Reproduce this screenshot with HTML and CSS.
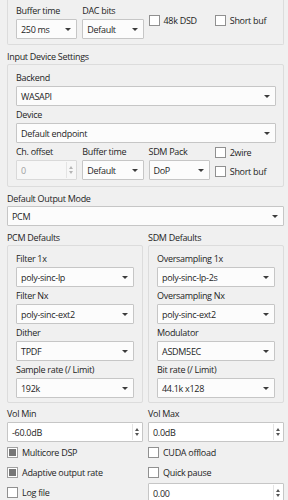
FILE: index.html
```html
<!DOCTYPE html>
<html lang="en">
<head>
    <meta charset="UTF-8">
    <meta name="viewport" content="width=device-width, initial-scale=1.0">
    <title>Audio Settings</title>
    <link rel="stylesheet" href="styles.css">
</head>
<body>
    <div class="page">
        <div class="group group-top">
            <div class="row4">
                <div class="field">
                    <div class="lbl">Buffer time</div>
                    <div class="combo">250 ms</div>
                </div>
                <div class="field">
                    <div class="lbl">DAC bits</div>
                    <div class="combo">Default</div>
                </div>
                <label class="check mid"><span class="box"></span>48k DSD</label>
                <label class="check mid"><span class="box"></span>Short buf</label>
            </div>
        </div>

        <div class="title">Input Device Settings</div>
        <div class="group">
            <div class="field">
                <div class="lbl">Backend</div>
                <div class="combo">WASAPI</div>
            </div>
            <div class="field">
                <div class="lbl">Device</div>
                <div class="combo">Default endpoint</div>
            </div>
            <div class="row4">
                <div class="field">
                    <div class="lbl">Ch. offset</div>
                    <div class="spin disabled"><span class="val">0</span><span class="arrows"><i class="up"></i><i class="down"></i></span></div>
                </div>
                <div class="field">
                    <div class="lbl">Buffer time</div>
                    <div class="combo">Default</div>
                </div>
                <div class="field">
                    <div class="lbl">SDM Pack</div>
                    <div class="combo">DoP</div>
                </div>
                <div class="checks">
                    <label class="check"><span class="box"></span>2wire</label>
                    <label class="check"><span class="box"></span>Short buf</label>
                </div>
            </div>
        </div>

        <div class="title">Default Output Mode</div>
        <div class="combo">PCM</div>

        <div class="cols">
            <div class="col">
                <div class="title">PCM Defaults</div>
                <div class="group">
                    <div class="field">
                        <div class="lbl">Filter 1x</div>
                        <div class="combo">poly-sinc-lp</div>
                    </div>
                    <div class="field">
                        <div class="lbl">Filter Nx</div>
                        <div class="combo">poly-sinc-ext2</div>
                    </div>
                    <div class="field">
                        <div class="lbl">Dither</div>
                        <div class="combo">TPDF</div>
                    </div>
                    <div class="field">
                        <div class="lbl">Sample rate (/ Limit)</div>
                        <div class="combo">192k</div>
                    </div>
                </div>
            </div>
            <div class="col">
                <div class="title">SDM Defaults</div>
                <div class="group">
                    <div class="field">
                        <div class="lbl">Oversampling 1x</div>
                        <div class="combo">poly-sinc-lp-2s</div>
                    </div>
                    <div class="field">
                        <div class="lbl">Oversampling Nx</div>
                        <div class="combo">poly-sinc-ext2</div>
                    </div>
                    <div class="field">
                        <div class="lbl">Modulator</div>
                        <div class="combo">ASDM5EC</div>
                    </div>
                    <div class="field">
                        <div class="lbl">Bit rate (/ Limit)</div>
                        <div class="combo">44.1k x128</div>
                    </div>
                </div>
            </div>
        </div>

        <div class="cols bottom">
            <div class="col">
                <div class="lbl">Vol Min</div>
                <div class="spin"><span class="val">-60.0dB</span><span class="arrows"><i class="up"></i><i class="down"></i></span></div>
                <label class="check line"><span class="box partial"></span>Multicore DSP</label>
                <label class="check line"><span class="box partial"></span>Adaptive output rate</label>
                <label class="check line"><span class="box"></span>Log file</label>
            </div>
            <div class="col">
                <div class="lbl">Vol Max</div>
                <div class="spin"><span class="val">0.0dB</span><span class="arrows"><i class="up"></i><i class="down"></i></span></div>
                <label class="check line"><span class="box"></span>CUDA offload</label>
                <label class="check line"><span class="box"></span>Quick pause</label>
                <div class="line">
                    <div class="spin"><span class="val">0.00</span><span class="arrows"><i class="up"></i><i class="down"></i></span></div>
                </div>
            </div>
        </div>
    </div>
</body>
</html>
```

FILE: styles.css
```css
* {
    margin: 0;
    padding: 0;
    box-sizing: border-box;
}

body {
    font-family: 'Open Sans', 'Noto Sans', sans-serif;
    font-size: 9px;
    letter-spacing: -0.3px;
    color: #1e1e1e;
    background: #f0f0f0;
    overflow: hidden;
}

.page {
    width: 288px;
    padding: 0 4px 0 7px;
}

/* frames */
.group {
    border: 1px solid #dcdcdc;
    border-radius: 2px;
    padding: 5px 7px 5px 8px;
}

.group-top {
    margin-top: -10px;
    border-top-color: transparent;
    padding-top: 12px;
    padding-bottom: 4px;
}

.title {
    height: 15px;
    line-height: 15px;
    margin-top: 4px;
}

.field {
    margin-bottom: 1px;
}

.field:last-child {
    margin-bottom: 0;
}

.lbl {
    height: 15px;
    line-height: 15px;
    margin-bottom: 1px;
    white-space: nowrap;
}

.row4 {
    display: grid;
    grid-template-columns: repeat(4, 1fr);
    gap: 5px;
}

/* combo box */
.combo {
    height: 20px;
    border: 1px solid #c6c6c6;
    border-radius: 1px;
    background: #fcfcfc;
    padding-left: 4px;
    display: flex;
    align-items: center;
    white-space: nowrap;
}

.combo::after {
    content: "";
    margin-left: auto;
    margin-right: 5px;
    border-left: 3px solid transparent;
    border-right: 3px solid transparent;
    border-top: 3px solid #3c3c3c;
}

/* spin box */
.spin {
    height: 20px;
    border: 1px solid #c6c6c6;
    border-radius: 1px;
    background: #fff;
    display: flex;
    align-items: center;
}

.spin .val {
    flex: 1;
    padding-left: 4px;
}

.spin .arrows {
    width: 9px;
    height: 16px;
    margin-right: 1px;
    border-left: 1px solid #e4e4e4;
    display: flex;
    flex-direction: column;
    justify-content: center;
    align-items: center;
    gap: 2px;
}

.spin .up {
    border-left: 2px solid transparent;
    border-right: 2px solid transparent;
    border-bottom: 3px solid #555;
}

.spin .down {
    border-left: 2px solid transparent;
    border-right: 2px solid transparent;
    border-top: 3px solid #555;
}

.spin.disabled {
    border-color: #d9d9d9;
    color: #a0a0a0;
    background: #f7f7f7;
}

.spin.disabled .up {
    border-bottom-color: #b5b5b5;
}

.spin.disabled .down {
    border-top-color: #b5b5b5;
}

/* checkboxes */
.check {
    display: flex;
    align-items: center;
    height: 20px;
    white-space: nowrap;
}

.check.mid {
    align-self: center;
    margin-top: -2px;
}

.box {
    width: 11px;
    height: 11px;
    border: 1px solid #909090;
    background: #fff;
    margin-right: 4px;
    padding: 2px;
}

.box.partial {
    border-color: #a0a0a0;
    padding: 1px;
}

.box.partial::before {
    content: "";
    display: block;
    width: 7px;
    height: 7px;
    background: #767676;
}

.checks {
    display: flex;
    flex-direction: column;
}

.checks .check {
    height: 17px;
}

.checks .check + .check {
    height: 20px;
}

/* two-column part */
.cols {
    display: grid;
    grid-template-columns: 1fr 1fr;
    gap: 5px;
}

.cols .group {
    padding-right: 8px;
    padding-bottom: 4px;
}

.bottom {
    margin-top: 3px;
}

.line {
    height: 20px;
    display: flex;
    align-items: center;
}

.line .spin {
    flex: 1;
    margin-top: 2px;
}
```
